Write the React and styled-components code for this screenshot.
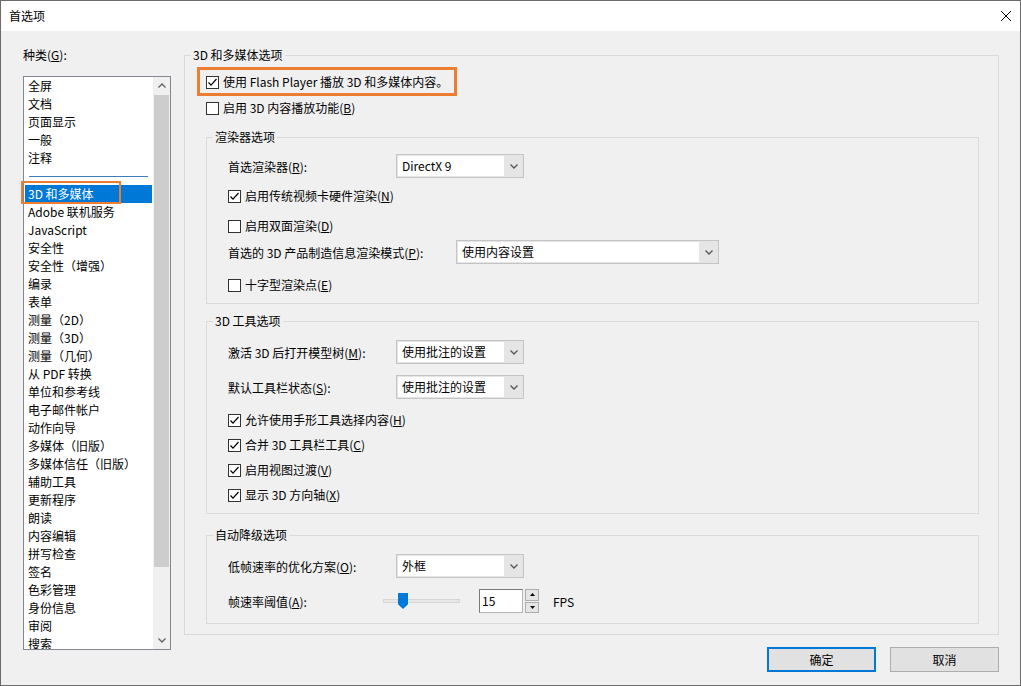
import React from "react";
import styled, { createGlobalStyle } from "styled-components";

const GlobalStyle = createGlobalStyle`
  html, body {
    margin: 0;
    padding: 0;
  }
  body {
    font-family: "Noto Sans CJK SC", "Microsoft YaHei", sans-serif;
    font-size: 12px;
    color: #000;
    background: #f0f0f0;
  }
  * {
    box-sizing: border-box;
  }
`;

const Window = styled.div`
  width: 1021px;
  height: 686px;
  border: 1px solid #6b6b6b;
  background: #f0f0f0;
  display: flex;
  flex-direction: column;
  overflow: hidden;
`;

const TitleBar = styled.div`
  height: 30px;
  flex-shrink: 0;
  background: #fff;
  display: flex;
  align-items: center;
  justify-content: space-between;
  padding: 0 8px;
  line-height: 18px;
`;

const Body = styled.div`
  flex: 1;
  display: flex;
  padding: 15px 0 0 22px;
`;

const LeftColumn = styled.div`
  width: 148px;
  display: flex;
  flex-direction: column;
`;

const CategoryLabel = styled.div`
  height: 18px;
  line-height: 18px;
  margin-bottom: 12px;
`;

const ListBox = styled.div`
  height: 574px;
  border: 1px solid #828790;
  background: #fff;
  display: flex;
`;

const Items = styled.div`
  flex: 1;
  padding: 0 1px;
  overflow-x: visible;
  overflow-y: clip;
`;

const Item = styled.div`
  position: relative;
  height: 18px;
  line-height: 18px;
  padding-left: 3px;
  white-space: nowrap;
  background: ${(p) => (p.$selected ? "#0078d7" : "transparent")};
  color: ${(p) => (p.$selected ? "#fff" : "#000")};
`;

const Separator = styled.div`
  height: 18px;
  display: flex;
  align-items: center;
  padding: 0 4px 0 4px;

  &::after {
    content: "";
    flex: 1;
    height: 1px;
    margin-top: 1px;
    background: #3d7dbd;
  }
`;

const Annotation = styled.span`
  position: absolute;
  left: -4px;
  top: -4px;
  width: 100px;
  height: 23px;
  border: 2px solid #ed7d31;
  pointer-events: none;
`;

const ScrollBar = styled.div`
  width: 17px;
  background: #f0f0f0;
  display: flex;
  flex-direction: column;
`;

const ScrollButton = styled.div`
  height: 17px;
  display: flex;
  align-items: center;
  justify-content: center;
`;

const ScrollTrack = styled.div`
  flex: 1;
  padding: 1px 1px 0;
`;

const Thumb = styled.div`
  height: 472px;
  background: #cdcdcd;
`;

const RightColumn = styled.div`
  width: 815px;
  margin-left: 13px;
  display: flex;
  flex-direction: column;
`;

const Group = styled.fieldset`
  margin: ${(p) => p.$mt || 0}px ${(p) => (p.$inner ? 19 : 0)}px 0
    ${(p) => (p.$inner ? 21 : 0)}px;
  padding: 0 0 ${(p) => p.$pb || 0}px ${(p) => (p.$inner ? 21 : 0)}px;
  min-width: 0;
  border: 1px solid #dadada;
  display: flex;
  flex-direction: column;
`;

const Legend = styled.legend`
  margin-left: ${(p) => (p.$inner ? -15 : 6)}px;
  padding: 0 2px;
  line-height: 18px;
  height: 18px;
`;

const Callout = styled.div`
  width: 260px;
  margin: 3px 0 0 12px;
  border: 3px solid #ed7d31;
  padding: 3px 6px 2px 6px;
`;

const CheckRow = styled.label`
  display: flex;
  align-items: center;
  gap: 4px;
  height: 18px;
  line-height: 18px;
  white-space: nowrap;
  margin: ${(p) => p.$mt || 0}px 0 0 ${(p) => p.$ml || 0}px;
`;

const Box = styled.span`
  width: 13px;
  height: 13px;
  flex-shrink: 0;
  border: 1px solid #333;
  background: #fff;
  display: flex;
  align-items: center;
  justify-content: center;
`;

const FieldRow = styled.div`
  display: flex;
  align-items: center;
  height: 24px;
  margin-top: ${(p) => p.$mt || 0}px;
  white-space: nowrap;
`;

const FieldLabel = styled.span`
  width: ${(p) => p.$w}px;
  flex-shrink: 0;
`;

const Combo = styled.div`
  width: ${(p) => p.$w}px;
  height: 24px;
  border: 1px solid #c4c4c4;
  background: #e5e5e5;
  display: flex;
  padding: 1px 0 1px 1px;
`;

const ComboText = styled.div`
  flex: 1;
  background: #fff;
  padding-left: 4px;
  line-height: 20px;
`;

const ComboArrow = styled.div`
  width: 19px;
  display: flex;
  align-items: center;
  justify-content: center;
`;

const Slider = styled.div`
  position: relative;
  width: 77px;
  height: 24px;
  margin-right: 19px;
  display: flex;
  align-items: center;
`;

const Track = styled.div`
  flex: 1;
  height: 4px;
  background: #e7e7e7;
  border: 1px solid #d6d6d6;
`;

const SliderThumb = styled.div`
  position: absolute;
  left: 15px;
  top: 4px;
  width: 10px;
  height: 16px;
  background: #0078d7;
  clip-path: polygon(0 0, 100% 0, 100% 70%, 50% 100%, 0 70%);
`;

const SpinInput = styled.div`
  width: 44px;
  height: 24px;
  background: #fff;
  border: 1px solid #7a7a7a;
  border-right-color: #b5b5b5;
  border-bottom-color: #b5b5b5;
  padding-left: 2px;
  line-height: 22px;
`;

const SpinButtons = styled.div`
  width: 14px;
  height: 24px;
  margin-left: 2px;
  display: flex;
  flex-direction: column;
  gap: 1px;
`;

const SpinButton = styled.div`
  flex: 1;
  border: 1px solid #adadad;
  background: #e5e5e5;
  display: flex;
  align-items: center;
  justify-content: center;
`;

const Unit = styled.span`
  margin-left: 14px;
`;

const ButtonRow = styled.div`
  display: flex;
  justify-content: flex-end;
  gap: 14px;
  margin-top: 12px;
`;

const Button = styled.button`
  width: 109px;
  height: 25px;
  font: inherit;
  color: #000;
  background: #e1e1e1;
  border: ${(p) => (p.$primary ? "2px solid #0078d7" : "1px solid #adadad")};
  padding: 0;
`;

const Check = ({ checked }) => (
  <Box>
    {checked && (
      <svg width="11" height="11" viewBox="0 0 11 11">
        <polyline
          points="1.5,5.5 4,8.2 9.5,2"
          fill="none"
          stroke="#000"
          strokeWidth="1.2"
        />
      </svg>
    )}
  </Box>
);

const Chevron = ({ up, color = "#606060", w = 8, h = 5 }) => (
  <svg width={w} height={h} viewBox="0 0 8 5">
    <polyline
      points={up ? "0.5,4.5 4,1 7.5,4.5" : "0.5,0.5 4,4 7.5,0.5"}
      fill="none"
      stroke={color}
      strokeWidth="1.3"
    />
  </svg>
);

const Triangle = ({ up }) => (
  <svg width="5" height="3" viewBox="0 0 5 3">
    <polygon points={up ? "0,3 5,3 2.5,0" : "0,0 5,0 2.5,3"} fill="#000" />
  </svg>
);

const Mn = ({ label, k }) => (
  <>
    {label}(<u>{k}</u>)
  </>
);

const Dropdown = ({ width, value }) => (
  <Combo $w={width}>
    <ComboText>{value}</ComboText>
    <ComboArrow>
      <Chevron color="#555" w={8} h={5} />
    </ComboArrow>
  </Combo>
);

const categoriesTop = ["全屏", "文档", "页面显示", "一般", "注释"];
const categoriesBottom = [
  "Adobe 联机服务",
  "JavaScript",
  "安全性",
  "安全性（增强）",
  "编录",
  "表单",
  "测量（2D）",
  "测量（3D）",
  "测量（几何）",
  "从 PDF 转换",
  "单位和参考线",
  "电子邮件帐户",
  "动作向导",
  "多媒体（旧版）",
  "多媒体信任（旧版）",
  "辅助工具",
  "更新程序",
  "朗读",
  "内容编辑",
  "拼写检查",
  "签名",
  "色彩管理",
  "身份信息",
  "审阅",
  "搜索",
];

const App = () => {
  return (
    <>
      <GlobalStyle />
      <Window>
        <TitleBar>
          <span>首选项</span>
          <svg width="12" height="12" viewBox="0 0 12 12">
            <path d="M1 1 L11 11 M11 1 L1 11" stroke="#000" strokeWidth="1" />
          </svg>
        </TitleBar>
        <Body>
          <LeftColumn>
            <CategoryLabel>
              种类(<u>G</u>):
            </CategoryLabel>
            <ListBox>
              <Items>
                {categoriesTop.map((c) => (
                  <Item key={c}>{c}</Item>
                ))}
                <Separator />
                <Item $selected>
                  3D 和多媒体
                  <Annotation />
                </Item>
                {categoriesBottom.map((c) => (
                  <Item key={c}>{c}</Item>
                ))}
              </Items>
              <ScrollBar>
                <ScrollButton>
                  <Chevron up />
                </ScrollButton>
                <ScrollTrack>
                  <Thumb />
                </ScrollTrack>
                <ScrollButton>
                  <Chevron />
                </ScrollButton>
              </ScrollBar>
            </ListBox>
          </LeftColumn>

          <RightColumn>
            <Group $pb={10}>
              <Legend>3D 和多媒体选项</Legend>
              <Callout>
                <CheckRow>
                  <Check checked />
                  使用 Flash Player 播放 3D 和多媒体内容。
                </CheckRow>
              </Callout>
              <CheckRow $mt={3} $ml={21}>
                <Check />
                <span>
                  <Mn label="启用 3D 内容播放功能" k="B" />
                </span>
              </CheckRow>

              <Group $inner $mt={11} $pb={9}>
                <Legend $inner>渲染器选项</Legend>
                <FieldRow $mt={8}>
                  <FieldLabel $w={168}>
                    <Mn label="首选渲染器" k="R" />:
                  </FieldLabel>
                  <Dropdown width={128} value="DirectX 9" />
                </FieldRow>
                <CheckRow $mt={9}>
                  <Check checked />
                  <span>
                    <Mn label="启用传统视频卡硬件渲染" k="N" />
                  </span>
                </CheckRow>
                <CheckRow $mt={12}>
                  <Check />
                  <span>
                    <Mn label="启用双面渲染" k="D" />
                  </span>
                </CheckRow>
                <FieldRow $mt={5}>
                  <FieldLabel $w={228}>
                    <Mn label="首选的 3D 产品制造信息渲染模式" k="P" />:
                  </FieldLabel>
                  <Dropdown width={263} value="使用内容设置" />
                </FieldRow>
                <CheckRow $mt={12}>
                  <Check />
                  <span>
                    <Mn label="十字型渲染点" k="E" />
                  </span>
                </CheckRow>
              </Group>

              <Group $inner $mt={8} $pb={9}>
                <Legend $inner>3D 工具选项</Legend>
                <FieldRow $mt={10}>
                  <FieldLabel $w={168}>
                    <Mn label="激活 3D 后打开模型树" k="M" />:
                  </FieldLabel>
                  <Dropdown width={128} value="使用批注的设置" />
                </FieldRow>
                <FieldRow $mt={11}>
                  <FieldLabel $w={168}>
                    <Mn label="默认工具栏状态" k="S" />:
                  </FieldLabel>
                  <Dropdown width={128} value="使用批注的设置" />
                </FieldRow>
                <CheckRow $mt={12}>
                  <Check checked />
                  <span>
                    <Mn label="允许使用手形工具选择内容" k="H" />
                  </span>
                </CheckRow>
                <CheckRow $mt={7}>
                  <Check checked />
                  <span>
                    <Mn label="合并 3D 工具栏工具" k="C" />
                  </span>
                </CheckRow>
                <CheckRow $mt={7}>
                  <Check checked />
                  <span>
                    <Mn label="启用视图过渡" k="V" />
                  </span>
                </CheckRow>
                <CheckRow $mt={7}>
                  <Check checked />
                  <span>
                    <Mn label="显示 3D 方向轴" k="X" />
                  </span>
                </CheckRow>
              </Group>

              <Group $inner $mt={12} $pb={10}>
                <Legend $inner>自动降级选项</Legend>
                <FieldRow $mt={10}>
                  <FieldLabel $w={168}>
                    <Mn label="低帧速率的优化方案" k="O" />:
                  </FieldLabel>
                  <Dropdown width={128} value="外框" />
                </FieldRow>
                <FieldRow $mt={11}>
                  <FieldLabel $w={155}>
                    <Mn label="帧速率阈值" k="A" />:
                  </FieldLabel>
                  <Slider>
                    <Track />
                    <SliderThumb />
                  </Slider>
                  <SpinInput>15</SpinInput>
                  <SpinButtons>
                    <SpinButton>
                      <Triangle up />
                    </SpinButton>
                    <SpinButton>
                      <Triangle />
                    </SpinButton>
                  </SpinButtons>
                  <Unit>FPS</Unit>
                </FieldRow>
              </Group>
            </Group>

            <ButtonRow>
              <Button $primary>确定</Button>
              <Button>取消</Button>
            </ButtonRow>
          </RightColumn>
        </Body>
      </Window>
    </>
  );
};

export default App;
